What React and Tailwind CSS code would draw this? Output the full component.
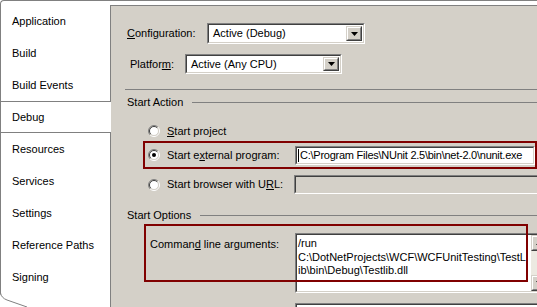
import React from "react";

const tabs = [
  "Application",
  "Build",
  "Build Events",
  "Debug",
  "Resources",
  "Services",
  "Settings",
  "Reference Paths",
  "Signing",
];

function Radio({checked}) {
  return (
    <svg width="12" height="12" viewBox="0 0 12 12" className="shrink-0">
      <circle cx="6" cy="6" r="4.5" fill="#fff" />
      <path d="M2.1 9.9 A5.5 5.5 0 0 1 9.9 2.1" fill="none" stroke="#808080" />
      <path d="M9.9 2.1 A5.5 5.5 0 0 1 2.1 9.9" fill="none" stroke="#fff" />
      <path d="M2.8 9.2 A4.5 4.5 0 0 1 9.2 2.8" fill="none" stroke="#404040" />
      <path d="M9.2 2.8 A4.5 4.5 0 0 1 2.8 9.2" fill="none" stroke="#d4d0c8" />
      {checked && <circle cx="6" cy="6" r="2" fill="#000" />}
    </svg>
  );
}

// classic sunken 3d edge
function Sunken({className, inner, children}) {
  return (
    <div className={"border border-[#808080] border-r-white border-b-white " + className}>
      <div className={"h-full border border-[#404040] border-r-[#d4d0c8] border-b-[#d4d0c8] " + inner}>
        {children}
      </div>
    </div>
  );
}

function DropButton() {
  return (
    <div className="h-full w-[16px] shrink-0 border border-[#d4d0c8] border-r-[#404040] border-b-[#404040]">
      <div className="flex h-full items-center justify-center border border-white border-r-[#808080] border-b-[#808080] bg-[#d4d0c8]">
        <svg width="7" height="4" viewBox="0 0 7 4">
          <path d="M0 0h7L3.5 4z" fill="#000" />
        </svg>
      </div>
    </div>
  );
}

function Combo({className, value}) {
  return (
    <Sunken className={className} inner="bg-white">
      <div className="flex h-full items-center p-px">
        <span className="flex-1 pl-[3px]">{value}</span>
        <DropButton />
      </div>
    </Sunken>
  );
}

function ScrollButton({up}) {
  return (
    <div className="h-[16px] w-[16px] border border-[#d4d0c8] border-r-[#404040] border-b-[#404040]">
      <div className="flex h-full items-center justify-center border border-white border-r-[#808080] border-b-[#808080] bg-[#d4d0c8]">
        <svg width="7" height="4" viewBox="0 0 7 4">
          <path d={up ? "M0 4h7L3.5 0z" : "M0 0h7L3.5 4z"} fill="#000" />
        </svg>
      </div>
    </div>
  );
}

function SectionHeader({title}) {
  return (
    <div className="flex h-[13px] items-center pl-[16px]">
      <span>{title}</span>
      <div className="ml-[9px] h-px flex-1 bg-[#808080]" />
    </div>
  );
}

export default function App() {
  return (
    <div className="relative h-[307px] w-[537px] overflow-hidden bg-white font-['Liberation_Sans',Arial,sans-serif] text-[11px] text-black">
      <div className="flex h-full rounded-tl-[4px] border-l border-t border-[#808080] pt-[4px]">
        {/* page tabs */}
        <div className="w-[109px] shrink-0">
          {tabs.map((t) =>
            t === "Debug" ? (
              <div
                key={t}
                className="relative z-10 flex h-8 w-[110px] items-center border-y border-[#808080] bg-white pl-[11px]"
              >
                {t}
              </div>
            ) : (
              <div key={t} className="flex h-8 items-center pl-[11px]">
                {t}
              </div>
            )
          )}
        </div>

        {/* debug page */}
        <div className="min-w-0 flex-1 border-l border-t border-[#808080] bg-[#d4d0c8]">
          <div className="w-[440px] pt-[17px]">
            <div className="flex h-[21px] items-center pl-[16px]">
              <span className="w-[80px]">
                <u>C</u>onfiguration:
              </span>
              <Combo className="h-[21px] w-[158px]" value="Active (Debug)" />
            </div>

            <div className="mt-[10px] flex h-[20px] items-center pl-[19px]">
              <span className="w-[55px]">
                Platfor<u>m</u>:
              </span>
              <Combo className="h-[20px] w-[157px]" value="Active (Any CPU)" />
            </div>

            <div className="ml-[14px] mt-[15px] h-px bg-[#808080]" />

            <div className="mt-[6px]">
              <SectionHeader title="Start Action" />
            </div>

            <div className="mt-[15px] flex h-[14px] items-center pl-[37px]">
              <Radio />
              <span className="ml-[7px]">
                <u>S</u>tart project
              </span>
            </div>

            <div className="ml-[32px] mt-[3px] flex h-[28px] w-[394px] items-center border-2 border-[#800000] pl-[3px]">
              <Radio checked />
              <span className="ml-[7px] w-[128px]">
                Start e<u>x</u>ternal program:
              </span>
              <Sunken className="h-[19px] w-[240px]" inner="bg-white overflow-hidden">
                <div className="flex h-full items-center whitespace-nowrap pl-px">
                  <span className="mr-px h-[13px] w-px shrink-0 bg-black" />
                  <span className="tracking-[-0.25px]">C:\Program Files\NUnit 2.5\bin\net-2.0\nunit.exe</span>
                </div>
              </Sunken>
            </div>

            <div className="mt-[6px] flex h-[19px] items-center pl-[37px]">
              <Radio />
              <span className="ml-[7px] w-[128px]">
                Start browser with U<u>R</u>L:
              </span>
              <Sunken className="h-[19px] w-[260px]" inner="bg-[#d4d0c8]" />
            </div>

            <div className="mt-[15px]">
              <SectionHeader title="Start Options" />
            </div>

            <div className="relative mt-[11px] flex items-start pl-[39px]">
              <span className="mt-[3px] w-[145px]">
                Comman<u>d</u> line arguments:
              </span>
              <Sunken className="h-[60px] w-[254px]" inner="bg-white">
                <div className="flex h-full">
                  <div className="flex-1 overflow-hidden whitespace-nowrap pl-[1px] pt-[2px] leading-[13.5px]">
                    <div>/run</div>
                    <div>C:\DotNetProjects\WCF\WCFUnitTesting\TestL</div>
                    <div>ib\bin\Debug\Testlib.dll</div>
                  </div>
                  <div className="flex w-[16px] flex-col justify-between bg-[#ece9e1]">
                    <ScrollButton up />
                    <ScrollButton />
                  </div>
                </div>
              </Sunken>
              <div className="pointer-events-none absolute left-[33px] top-[-9px] z-10 h-[58px] w-[384px] border-2 border-[#800000]" />
            </div>

            <div className="ml-[184px] mt-[10px]">
              <Sunken className="h-[20px] w-[254px]" inner="bg-white" />
            </div>
          </div>
        </div>
      </div>

      {/* curled page corner at the bottom left */}
      <svg className="absolute bottom-0 left-0" width="30" height="14" viewBox="0 0 30 14">
        <path d="M0 0 Q1 5 7 7 L27 14 L0 14Z" fill="#fff" />
        <path d="M0.5 0 Q1.5 5 7 7 L27 14" fill="none" stroke="#808080" />
      </svg>
    </div>
  );
}
